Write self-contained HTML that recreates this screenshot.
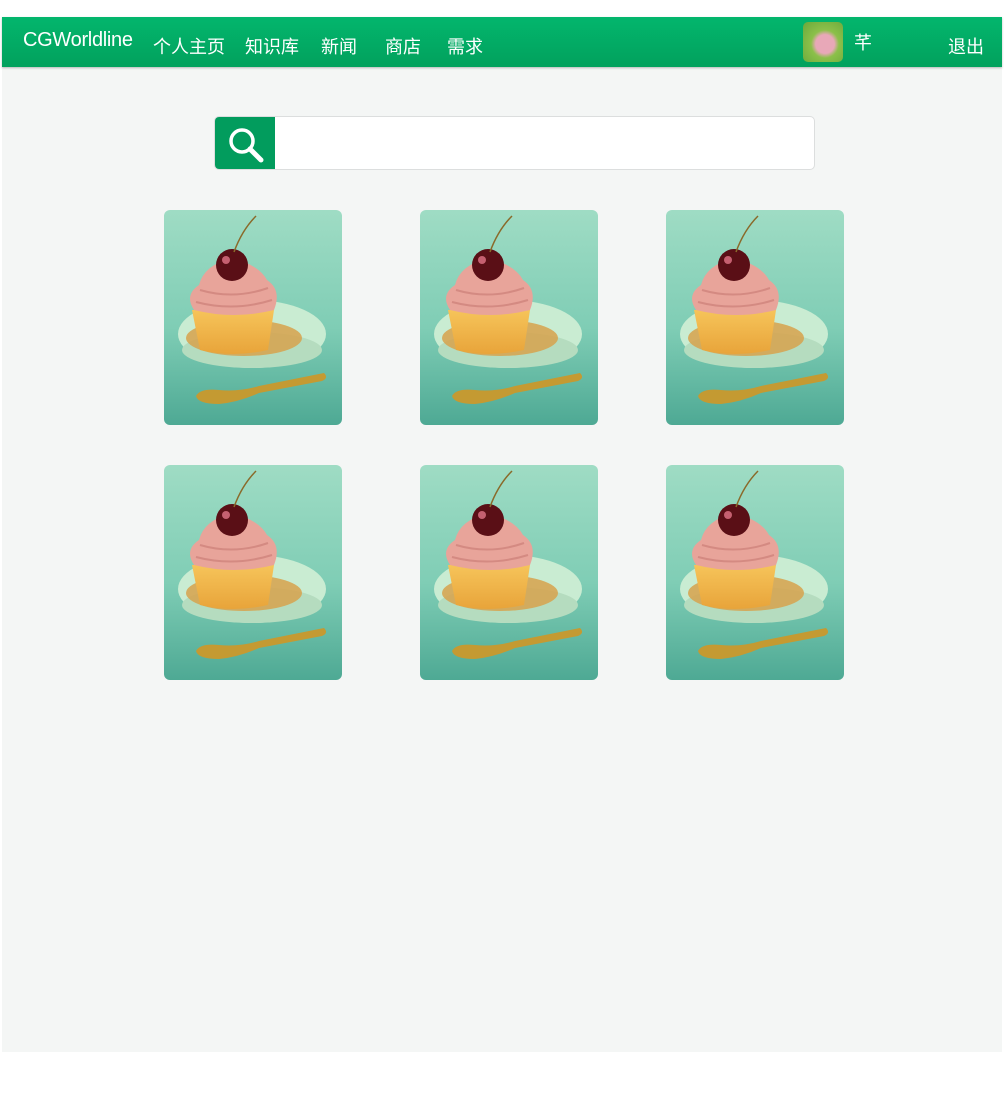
<!DOCTYPE html>
<html><head><meta charset="utf-8"><style>
*{margin:0;padding:0;box-sizing:border-box}
body{width:1004px;height:1096px;background:#fff;font-family:"Liberation Sans","Noto Sans CJK SC",sans-serif;position:relative;overflow:hidden}
.page{position:absolute;left:2px;top:17px;width:1000px;height:1035px;background:#f4f6f5}
.nav{position:absolute;left:0;top:0;width:1000px;height:50px;background:linear-gradient(#03b66d,#02a15d);box-shadow:0 1px 2px rgba(0,0,0,.25);color:#fff}
.nav span{position:absolute;font-size:18px;top:16px}
.logo{left:21px;top:12px!important;font-size:20px!important;letter-spacing:-0.3px}
.av{position:absolute;left:801px;top:5px;width:40px;height:40px;border-radius:5px;background:radial-gradient(circle at 55% 55%,#e8a8b8 0 30%,#8cc04a 45%,#6aa83a)}
.search{position:absolute;left:212px;top:99px;width:601px;height:54px;background:#fff;border:1px solid #dcdede;border-radius:5px;overflow:hidden}
.sbtn{position:absolute;left:0;top:0;width:60px;height:54px;background:#029c5d}
.card{position:absolute;width:178px;height:215px;border-radius:6px;overflow:hidden}
</style></head><body>
<svg width="0" height="0" style="position:absolute"><defs>
<linearGradient id="bg" x1="0" y1="0" x2="0" y2="1"><stop offset="0" stop-color="#9fdcc4"/><stop offset=".55" stop-color="#7fcdb5"/><stop offset="1" stop-color="#4ea994"/></linearGradient>
<linearGradient id="cup" x1="0" y1="0" x2="0" y2="1"><stop offset="0" stop-color="#f6c45a"/><stop offset="1" stop-color="#e8a43a"/></linearGradient>
<symbol id="cake" viewBox="0 0 178 215">
<rect width="178" height="215" fill="url(#bg)"/>
<ellipse cx="88" cy="124" rx="74" ry="34" fill="#c9ecd2"/>
<ellipse cx="88" cy="140" rx="70" ry="18" fill="#b5dcbf"/>
<ellipse cx="80" cy="128" rx="58" ry="18" fill="#d7a24c" opacity=".85"/>
<path d="M28 100 L110 100 L104 140 Q68 148 36 140Z" fill="url(#cup)"/>
<path d="M30 100 Q20 85 35 75 Q40 55 68 48 Q95 55 103 70 Q118 80 110 100 Q70 110 30 100Z" fill="#e8a49a"/>
<path d="M36 80 Q70 90 104 78 M32 92 Q70 102 108 90" stroke="#d48a82" stroke-width="2" fill="none"/>
<circle cx="68" cy="55" r="16" fill="#5a0f16"/>
<circle cx="62" cy="50" r="4" fill="#c56070"/>
<path d="M70 42 Q78 20 92 6" stroke="#8a6a2a" stroke-width="1.5" fill="none"/>
<path d="M32 186 Q36 178 55 180 Q75 182 95 176 L160 163 Q165 168 158 171 L95 183 Q75 192 55 194 Q34 194 32 186Z" fill="#c49a32"/>
</symbol></defs></svg>
<div class="page">
<div class="nav">
<span class="logo">CGWorldline</span>
<span style="left:151px">个人主页</span>
<span style="left:243px">知识库</span>
<span style="left:319px">新闻</span>
<span style="left:383px">商店</span>
<span style="left:445px">需求</span>
<div class="av"></div>
<span style="left:852px;top:12px">芊</span>
<span style="left:946px">退出</span>
</div>
<div class="search"><div class="sbtn"><svg width="60" height="54"><circle cx="27" cy="24" r="11" stroke="#fff" stroke-width="3.5" fill="none"/><line x1="35" y1="32" x2="46" y2="43" stroke="#fff" stroke-width="5" stroke-linecap="round"/></svg></div></div>
</div>
<div class="card" style="left:164px;top:210px"><svg width="178" height="215"><use href="#cake"/></svg></div>
<div class="card" style="left:420px;top:210px"><svg width="178" height="215"><use href="#cake"/></svg></div>
<div class="card" style="left:666px;top:210px"><svg width="178" height="215"><use href="#cake"/></svg></div>
<div class="card" style="left:164px;top:465px"><svg width="178" height="215"><use href="#cake"/></svg></div>
<div class="card" style="left:420px;top:465px"><svg width="178" height="215"><use href="#cake"/></svg></div>
<div class="card" style="left:666px;top:465px"><svg width="178" height="215"><use href="#cake"/></svg></div>
</body></html>
